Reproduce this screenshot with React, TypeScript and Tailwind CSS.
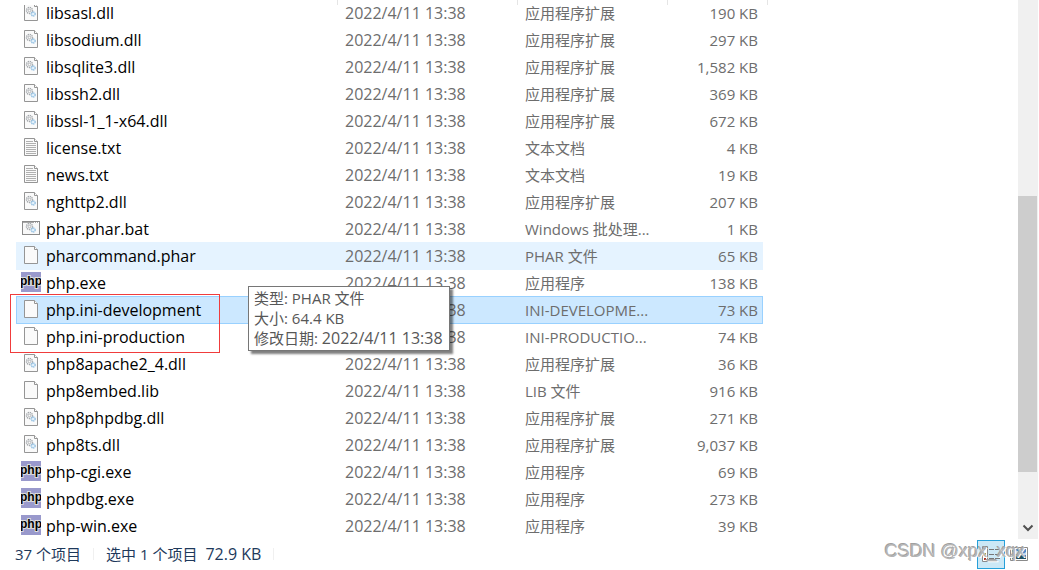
// src/components/FileExplorer.tsx
import { useState } from 'react';

type FileKind = 'dll' | 'txt' | 'bat' | 'blank' | 'php';

interface FileItem {
  name: string;
  kind: FileKind;
  type: string;
  size: string;
}

const MODIFIED = '2022/4/11 13:38';

const files: FileItem[] = [
  { name: 'libsasl.dll', kind: 'dll', type: '应用程序扩展', size: '190 KB' },
  { name: 'libsodium.dll', kind: 'dll', type: '应用程序扩展', size: '297 KB' },
  { name: 'libsqlite3.dll', kind: 'dll', type: '应用程序扩展', size: '1,582 KB' },
  { name: 'libssh2.dll', kind: 'dll', type: '应用程序扩展', size: '369 KB' },
  { name: 'libssl-1_1-x64.dll', kind: 'dll', type: '应用程序扩展', size: '672 KB' },
  { name: 'license.txt', kind: 'txt', type: '文本文档', size: '4 KB' },
  { name: 'news.txt', kind: 'txt', type: '文本文档', size: '19 KB' },
  { name: 'nghttp2.dll', kind: 'dll', type: '应用程序扩展', size: '207 KB' },
  { name: 'phar.phar.bat', kind: 'bat', type: 'Windows 批处理...', size: '1 KB' },
  { name: 'pharcommand.phar', kind: 'blank', type: 'PHAR 文件', size: '65 KB' },
  { name: 'php.exe', kind: 'php', type: '应用程序', size: '138 KB' },
  { name: 'php.ini-development', kind: 'blank', type: 'INI-DEVELOPME...', size: '73 KB' },
  { name: 'php.ini-production', kind: 'blank', type: 'INI-PRODUCTIO...', size: '74 KB' },
  { name: 'php8apache2_4.dll', kind: 'dll', type: '应用程序扩展', size: '36 KB' },
  { name: 'php8embed.lib', kind: 'blank', type: 'LIB 文件', size: '916 KB' },
  { name: 'php8phpdbg.dll', kind: 'dll', type: '应用程序扩展', size: '271 KB' },
  { name: 'php8ts.dll', kind: 'dll', type: '应用程序扩展', size: '9,037 KB' },
  { name: 'php-cgi.exe', kind: 'php', type: '应用程序', size: '69 KB' },
  { name: 'phpdbg.exe', kind: 'php', type: '应用程序', size: '273 KB' },
  { name: 'php-win.exe', kind: 'php', type: '应用程序', size: '39 KB' },
];

const Gears = () => (
  <g fill="none">
    <circle cx="8.5" cy="8.5" r="3" stroke="#a3a7ab" strokeWidth="1.4" strokeDasharray="1.3 0.7" />
    <circle cx="8.5" cy="8.5" r="1.3" stroke="#a3a7ab" strokeWidth="0.8" />
    <circle cx="12.2" cy="12" r="2" fill="#e3f1fb" stroke="#8fbde0" strokeWidth="1.3" strokeDasharray="1.2 0.5" />
  </g>
);

const FileIcon = ({ kind }: { kind: FileKind }) => {
  if (kind === 'php') {
    return (
      <svg width="20" height="20" viewBox="0 0 20 20" className="mb-px shrink-0" aria-hidden="true">
        <rect width="20" height="20" fill="#9999cc" />
        <text
          x="10"
          y="13"
          textAnchor="middle"
          fontSize="12"
          fontWeight="700"
          stroke="#dcdcdc"
          strokeWidth="2"
          paintOrder="stroke"
          className="font-['Liberation_Sans',sans-serif]"
        >
          php
        </text>
      </svg>
    );
  }

  if (kind === 'bat') {
    return (
      <svg width="20" height="20" viewBox="0 0 20 20" className="mb-px shrink-0" aria-hidden="true">
        <rect x="1.5" y="3.5" width="17" height="13" fill="#f8f8f8" stroke="#8a8a8a" />
        <path d="M2 4.5h16" stroke="#a8a8a8" />
        <path d="M13 4.5h1M15 4.5h1M17 4.5h1" stroke="#fff" />
        <Gears />
      </svg>
    );
  }

  return (
    <svg width="20" height="20" viewBox="0 0 20 20" className="mb-px shrink-0" aria-hidden="true">
      <path d="M3.5 1.5H13.5L16.5 4.5V18.5H3.5Z" fill="#fafafa" stroke="#959595" />
      <path d="M13.5 1.5V4.5H16.5" fill="#fff" stroke="#959595" />
      {kind === 'dll' && <Gears />}
      {kind === 'txt' && (
        <path d="M5 4.5h7M5 6.5h10M5 8.5h10M5 10.5h10M5 12.5h10M5 14.5h10M5 16.5h10" stroke="#b0b0b0" />
      )}
    </svg>
  );
};

const App = () => {
  const [selected, setSelected] = useState('php.ini-development');

  const rowClass = (name: string) => {
    if (name === selected) {
      return 'bg-[#cce8ff] shadow-[inset_1px_0_0_#99d1ff,inset_-1px_0_0_#99d1ff,inset_0_1px_0_#99d1ff,0_1px_0_#99d1ff]';
    }
    if (name === 'pharcommand.phar') {
      return 'bg-[#e5f3ff] shadow-[0_1px_0_#e5f3ff]';
    }
    return '';
  };

  return (
    <div className="relative w-full bg-white font-['Open_Sans','Noto_Sans_CJK_SC',sans-serif] text-[15px] leading-5 text-[#6d6d6d]">
      <div className="flex">
        <main className="relative min-w-0 grow pl-4">
          <table className="-mt-px w-[747px] table-fixed border-collapse">
            <colgroup>
              <col className="w-[321px]" />
              <col className="w-[180px]" />
              <col className="w-[150px]" />
              <col className="w-[96px]" />
            </colgroup>
            <tbody>
              {files.map((file) => (
                <tr key={file.name} className={rowClass(file.name)} onClick={() => setSelected(file.name)}>
                  <td className="h-[27px] p-0 pl-[5px]">
                    <div className="flex items-center gap-[5px] text-[16px] text-black">
                      <FileIcon kind={file.kind} />
                      <span>{file.name}</span>
                    </div>
                  </td>
                  <td className="p-0 pl-2 text-[16px]">{MODIFIED}</td>
                  <td className="whitespace-nowrap p-0 pl-2">{file.type}</td>
                  <td className="p-0 pr-[5px] text-right">{file.size}</td>
                </tr>
              ))}
            </tbody>
          </table>

          <div className="absolute left-4 top-0 flex h-[5px] bg-white">
            <span className="w-[322px] border-r border-[#e5e5e5]" />
            <span className="w-[180px] border-r border-[#e5e5e5]" />
            <span className="w-[150px] border-r border-[#e5e5e5]" />
            <span className="w-[100px] border-r border-[#e5e5e5]" />
          </div>

          <div className="pointer-events-none absolute left-[10px] top-[294px] h-[59px] w-[210px] border border-[#f03c3c]" />

          <div
            role="tooltip"
            className="absolute left-[248px] top-[286px] whitespace-nowrap border border-[#767676] bg-white pb-0.5 pl-[5px] pr-[6px] pt-px text-[#575757] shadow-[3px_3px_2px_#00000080]"
          >
            <p>类型: PHAR 文件</p>
            <p>大小: 64.4 KB</p>
            <p>
              修改日期: <span className="text-[16px]">{MODIFIED}</span>
            </p>
          </div>
        </main>

        <div className="mr-px flex w-5 shrink-0 flex-col bg-[#f0f0f0]">
          <div className="mr-px mt-[196px] h-[276px] bg-[#cdcdcd]" />
          <button type="button" aria-label="向下滚动" className="mt-auto flex h-[22px] items-center justify-center">
            <svg width="12" height="8" viewBox="0 0 12 8" aria-hidden="true">
              <path d="M1.5 1.5L6 6L10.5 1.5" fill="none" stroke="#505050" strokeWidth="2" />
            </svg>
          </button>
        </div>
      </div>

      <footer className="flex h-[30px] items-center pl-[15px] text-[#1e395b]">
        <span>37 个项目</span>
        <span className="mx-3 h-3 w-px bg-[#f0f0f0]" />
        <span>选中 1 个项目</span>
        <span className="ml-2 text-[16px]">72.9 KB</span>
        <span className="ml-3 h-3 w-px bg-[#f0f0f0]" />
        <div className="ml-auto mr-[6px] flex">
          <button
            type="button"
            aria-label="详细信息"
            className="flex h-[29px] w-7 items-center justify-center border border-[#26a0da] bg-[#cbe8f6]"
          >
            <svg width="18" height="16" viewBox="0 0 18 16" aria-hidden="true">
              <path d="M.5 .5h5v15h-5z" fill="#fff" stroke="#8a8a8a" />
              <path d="M2 2h2v2H2z" fill="#3f7f8f" />
              <path d="M2 7h2v2H2z" fill="#8a8f4f" />
              <path d="M2 12h2v2H2z" fill="#b03a22" />
              <path d="M7 3.5h5M13 3.5h5M7 8.5h5M13 8.5h5M7 12.5h5M13 12.5h5" stroke="#777" />
            </svg>
          </button>
          <button type="button" aria-label="大缩略图" className="flex h-[29px] w-7 items-center justify-center">
            <svg width="18" height="14" viewBox="0 0 18 14" aria-hidden="true">
              <path d="M.5 .5h17v13H.5z" fill="#fff" stroke="#8a8a8a" />
              <path d="M2 2h14v10H2z" fill="#4a86c5" />
              <path d="M2 5q4 -3 7 0t7 0v3H2z" fill="#c5dcf0" />
              <path d="M2 8q4 -2 14 2v2H2z" fill="#1f4f63" />
            </svg>
          </button>
        </div>
      </footer>

      <span className="pointer-events-none absolute bottom-2 right-[14px] font-['Liberation_Sans',sans-serif] text-[18px] leading-5 text-[#b4b4b4] [text-shadow:1px_1px_0_#ffffff,-1px_-1px_0_#a0a0a0]">
        CSDN @xpx_xqx
      </span>
    </div>
  );
};

export default App;
